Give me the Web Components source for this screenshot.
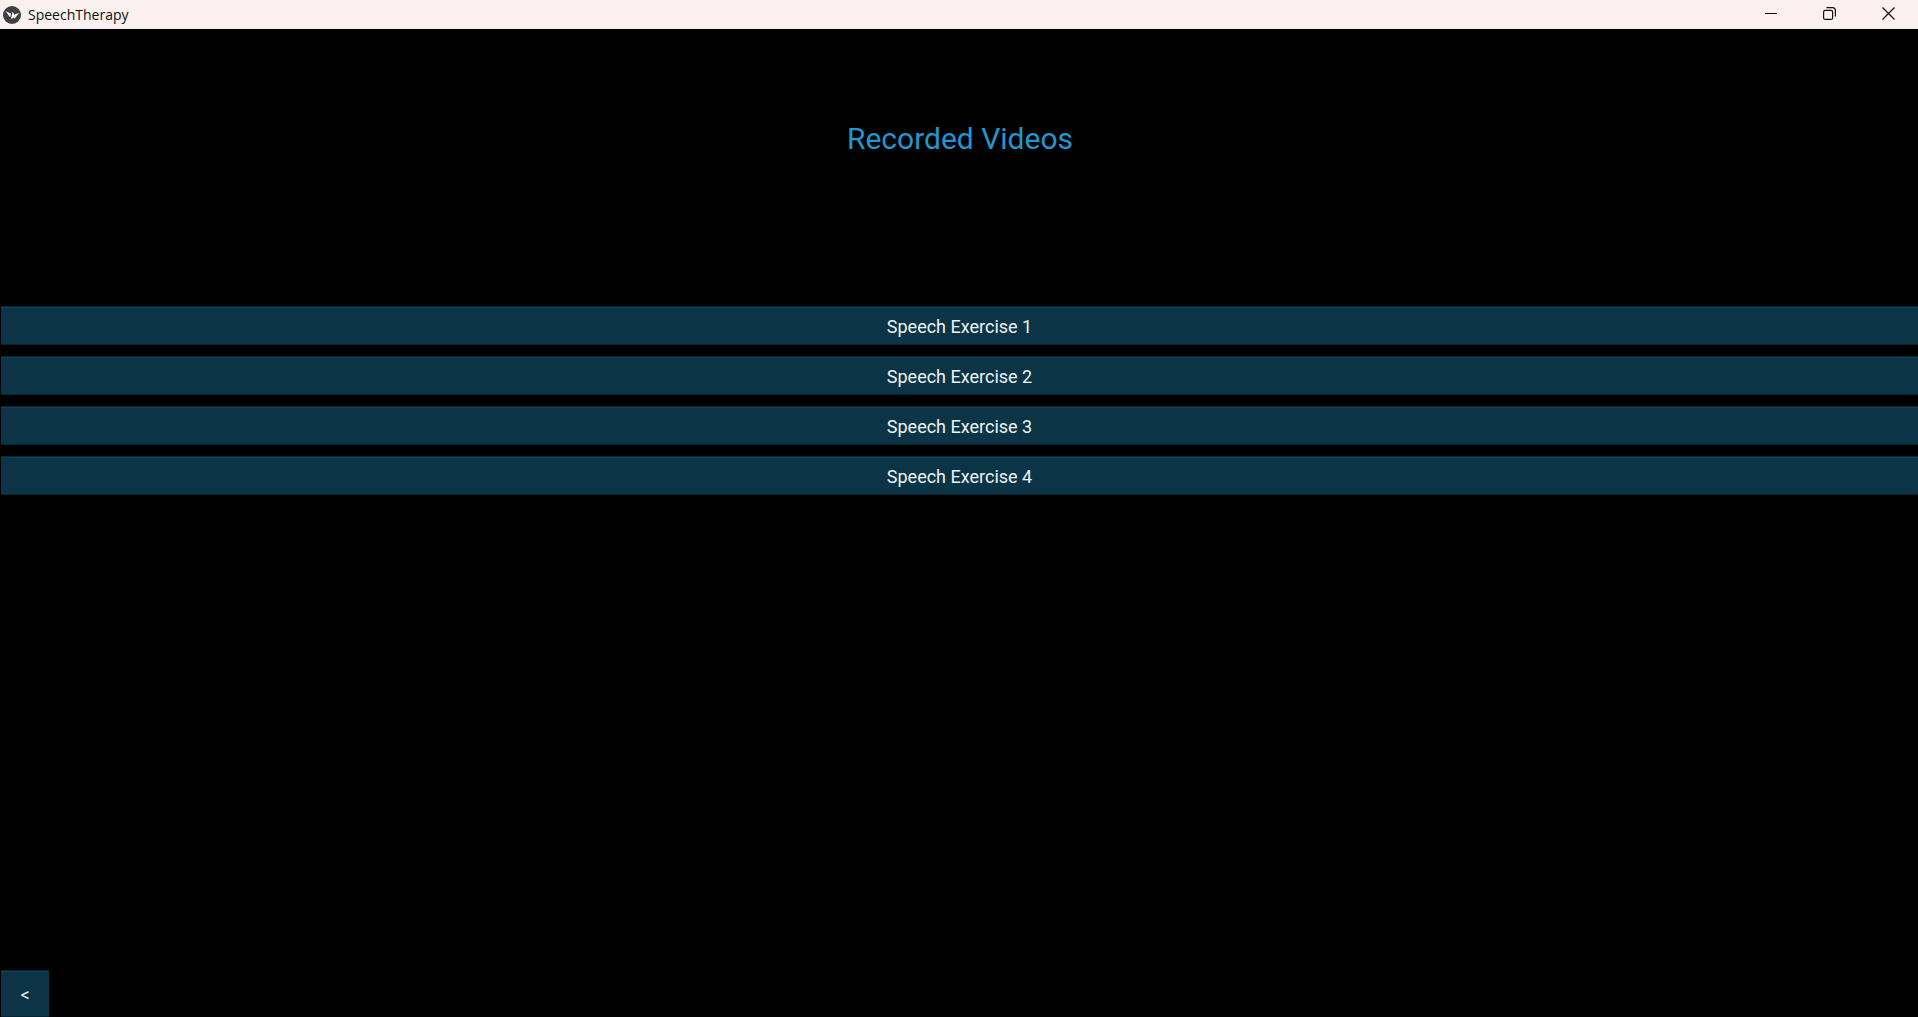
<!DOCTYPE html>
<html lang="en">
<head>
<meta charset="utf-8">
<title>SpeechTherapy</title>
<style>
html, body { height: 100%; margin: 0; background: #000; }
</style>
</head>
<body>
<therapy-window></therapy-window>
<script>
const define = (name, markup) => {
  const template = document.createElement('template');
  template.innerHTML = markup;
  customElements.define(name, class extends HTMLElement {
    constructor() {
      super();
      this.attachShadow({ mode: 'open' }).append(template.content.cloneNode(true));
    }
  });
};

define('title-bar', `
<style>
:host { display: flex; height: 29px; flex: none; background: #f9f0ef; color: #111; font: 14px/28px "Open Sans", sans-serif; }
.name { flex: 1; display: flex; align-items: center; gap: 7px; padding-left: 3px; }
.name svg { width: 18px; height: 18px; }
.controls { display: flex; padding-bottom: 2px; }
button { width: 59px; border: 0; padding: 0; background: none; color: inherit; display: flex; align-items: center; justify-content: center; }
button svg { width: 13px; height: 13px; fill: none; stroke: currentColor; }
</style>
<div class="name">
  <svg viewBox="0 0 18 18" aria-hidden="true"><circle cx="9" cy="9" r="9" fill="#3d4042"/><path d="M2.6 5.2L8 7.4l-.8 4.2zM8 12.2l1.6-6.4 2.3 3.4-2.8 3.8zM12.2 8.2l4-1.4-4.4 5.6-1.5-.6z" fill="#f4f4f4"/></svg>
  <span><slot></slot></span>
</div>
<div class="controls">
  <button aria-label="Minimize"><svg viewBox="0 0 13 13"><path d="M1 6.5h12"/></svg></button>
  <button aria-label="Restore"><svg viewBox="0 0 13 13"><rect x=".6" y="3.4" width="9" height="9" rx="1.5" stroke-width="1.2"/><path d="M3.5.6h6a2.9 2.9 0 0 1 2.9 2.9v6" stroke-width="1.2"/></svg></button>
  <button aria-label="Close"><svg viewBox="0 0 13 13"><path d="M.5 .5l12 12M12.5 .5L.5 12.5" stroke-width="1.2"/></svg></button>
</div>`);

define('action-button', `
<style>
:host { display: block; height: var(--size, 39px); }
button { width: 100%; height: 100%; padding: 2px 0 0; border: 0 solid #062431; border-width: 1px 0; border-radius: 1px; box-shadow: inset 0 1px #0e415a; background: #0b3546; color: #eef2f4; font: 18px/24px Roboto, sans-serif; }
</style>
<button><slot></slot></button>`);

define('video-list', `
<style>
:host { display: flex; flex-direction: column; gap: 11px; padding-left: 1px; }
</style>
<slot></slot>`);

define('therapy-window', `
<style>
:host { display: flex; flex-direction: column; min-height: 100vh; background: #000; }
h1 { margin: 0; height: 277px; box-sizing: border-box; padding: 92px 0 0 2px; text-align: center; color: #1f98cf; font: 400 30px/36px Roboto, sans-serif; }
main { flex: 1; }
footer { padding-left: 1px; }
footer action-button { width: 48px; --size: 47px; }
</style>
<title-bar>SpeechTherapy</title-bar>
<main>
  <h1>Recorded Videos</h1>
  <video-list>
    <action-button>Speech Exercise 1</action-button>
    <action-button>Speech Exercise 2</action-button>
    <action-button>Speech Exercise 3</action-button>
    <action-button>Speech Exercise 4</action-button>
  </video-list>
</main>
<footer><action-button>&lt;</action-button></footer>`);
</script>
</body>
</html>
